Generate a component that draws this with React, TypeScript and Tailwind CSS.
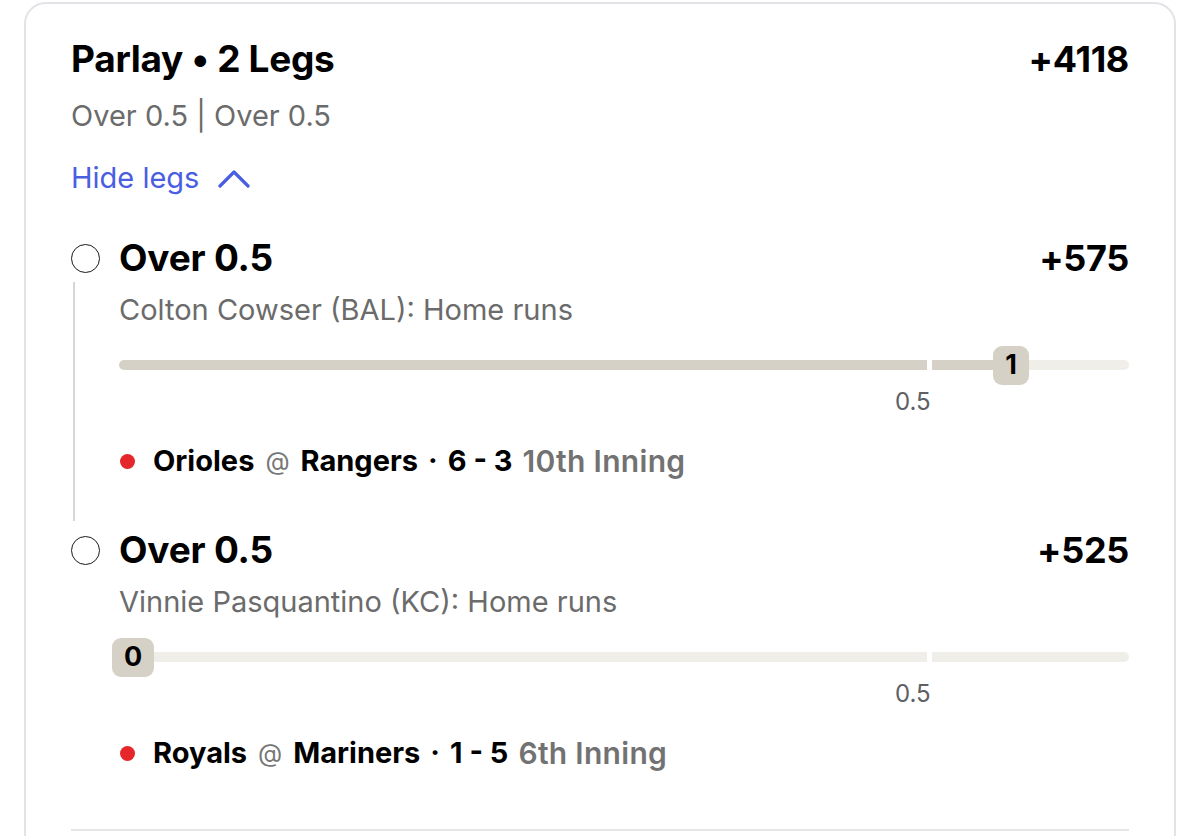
import React from "react";

interface Leg {
  line: string;
  odds: string;
  player: string;
  value: number;
  thumbLeft: string;
  away: string;
  home: string;
  score: string;
  inning: string;
  connector?: boolean;
}

const legs: Leg[] = [
  {
    line: "Over 0.5",
    odds: "+575",
    player: "Colton Cowser (BAL): Home runs",
    value: 1,
    thumbLeft: "left-[874px]",
    away: "Orioles",
    home: "Rangers",
    score: "6 - 3",
    inning: "10th Inning",
    connector: true,
  },
  {
    line: "Over 0.5",
    odds: "+525",
    player: "Vinnie Pasquantino (KC): Home runs",
    value: 0,
    thumbLeft: "left-[-7px]",
    away: "Royals",
    home: "Mariners",
    score: "1 - 5",
    inning: "6th Inning",
  },
];

function ProgressTrack({ leg }: { leg: Leg }) {
  const filled = leg.value > 0;
  return (
    <div className="relative h-[40px]">
      {/* track, split at the 0.5 mark */}
      <div className="absolute left-0 right-0 top-[15px] flex h-[10px] gap-[5px]">
        <div
          className={
            "w-[808px] rounded-l-full " +
            (filled ? "bg-[#d6d1c6]" : "bg-[#f0eee9]")
          }
        />
        <div className="flex flex-1 overflow-hidden rounded-r-full bg-[#f0eee9]">
          {filled && <div className="w-[70px] bg-[#d6d1c6]" />}
        </div>
      </div>
      <div
        className={
          "absolute top-[1px] flex h-[39px] items-center justify-center rounded-[9px] bg-[#d6d1c6] text-[27px] font-bold text-black " +
          leg.thumbLeft +
          (filled ? " w-[36px]" : " w-[42px]")
        }
      >
        {leg.value}
      </div>
    </div>
  );
}

function LegRow({ leg }: { leg: Leg }) {
  return (
    <div className="flex">
      <div className="flex w-[48px] shrink-0 flex-col">
        <div className="flex h-[46px] items-center">
          <div className="h-[29px] w-[29px] rounded-full border-[1.5px] border-[#1a1a1a]" />
        </div>
        {leg.connector && (
          <div className="ml-[2px] mt-[1px] w-[2px] flex-1 bg-[#d6d6d6]" />
        )}
      </div>
      <div className={"flex-1 " + (leg.connector ? "pb-[42px]" : "")}>
        <div className="flex items-center justify-between leading-[46px]">
          <span className="text-[37px] font-bold tracking-[-0.2px] text-black">
            {leg.line}
          </span>
          <span className="text-[36px] font-bold tracking-[-0.3px] text-black">
            {leg.odds}
          </span>
        </div>
        <div className="mt-[11px] text-[29px] leading-[36px] text-[#6b6b6b]">
          {leg.player}
        </div>
        <div className="mt-[17px]">
          <ProgressTrack leg={leg} />
          <div className="relative mt-[3px] h-[28px]">
            <span className="absolute left-[776px] text-[24px] leading-[28px] text-[#5f6064]">
              0.5
            </span>
          </div>
        </div>
        <div className="mt-[27px] flex items-center text-[29px] leading-[36px]">
          <span className="ml-[1px] mr-[18px] h-[15px] w-[15px] rounded-full bg-[#e5262b]" />
          <span className="font-bold text-black">{leg.away}</span>
          <span className="mx-[11px] text-[25px] text-[#777]">@</span>
          <span className="font-bold text-black">{leg.home}</span>
          <span className="mx-[10px] font-bold text-black">·</span>
          <span className="font-bold text-black">{leg.score}</span>
          <span className="ml-[10px] text-[30px] font-semibold tracking-[0.3px] text-[#727272]">
            {leg.inning}
          </span>
        </div>
      </div>
    </div>
  );
}

export default function App() {
  return (
    <div className="min-h-[836px] overflow-hidden bg-white font-['Inter',_'Liberation_Sans',_sans-serif]">
      <div className="ml-[24px] mt-[2px] w-[1152px] rounded-[22px] border-2 border-[#e2e3e7] px-[45px] pt-[32px]">
        <div className="flex items-center justify-between leading-[46px]">
          <span className="text-[37px] font-bold tracking-[-0.3px] text-black">
            Parlay • 2 Legs
          </span>
          <span className="text-[36px] font-bold tracking-[-0.3px] text-black">
            +4118
          </span>
        </div>
        <div className="mt-[16px] text-[29px] leading-[36px] text-[#6b6b6b]">
          Over 0.5 | Over 0.5
        </div>
        <button className="mt-[26px] flex items-center gap-[19px] text-[29px] leading-[36px] text-[#4a5ee2]">
          Hide legs
          <svg width="32" height="20" viewBox="0 0 32 20" fill="none">
            <path
              d="M2 18 L16 4 L30 18"
              stroke="#4a5ee2"
              strokeWidth="3.2"
              strokeLinecap="round"
              strokeLinejoin="round"
            />
          </svg>
        </button>
        <div className="mt-[39px] flex flex-col gap-[6px]">
          {legs.map((leg, i) => (
            <LegRow key={i} leg={leg} />
          ))}
        </div>
        <div className="mt-[58px] h-[2px] bg-[#e6e6e6]" />
        <div className="h-[40px]" />
      </div>
    </div>
  );
}
